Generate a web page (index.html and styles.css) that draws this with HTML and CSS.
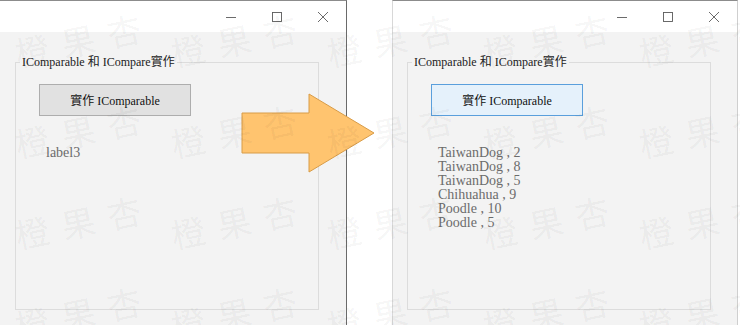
FILE: index.html
```html
<!DOCTYPE html>
<html>
<head>
<meta charset="utf-8">
<title>IComparable 和 ICompare實作</title>
<link rel="stylesheet" href="styles.css">
</head>
<body>
    <div class="screen">
        <div class="window window-before">
            <div class="titlebar">
                <span class="caption-btn">
                    <svg width="10" height="10" viewBox="0 0 10 10"><path d="M0 5.5h10" /></svg>
                </span>
                <span class="caption-btn">
                    <svg width="10" height="10" viewBox="0 0 10 10"><rect x="0.5" y="0.5" width="9" height="9" /></svg>
                </span>
                <span class="caption-btn">
                    <svg width="10" height="10" viewBox="0 0 10 10"><path d="M0 0l10 10M10 0L0 10" /></svg>
                </span>
            </div>
            <div class="client">
                <fieldset class="groupbox">
                    <legend>IComparable 和 ICompare實作</legend>
                    <button class="win-button">實作 IComparable</button>
                    <div class="output">label3</div>
                </fieldset>
            </div>
        </div>

        <div class="window window-after">
            <div class="titlebar">
                <span class="caption-btn">
                    <svg width="10" height="10" viewBox="0 0 10 10"><path d="M0 5.5h10" /></svg>
                </span>
                <span class="caption-btn">
                    <svg width="10" height="10" viewBox="0 0 10 10"><rect x="0.5" y="0.5" width="9" height="9" /></svg>
                </span>
                <span class="caption-btn">
                    <svg width="10" height="10" viewBox="0 0 10 10"><path d="M0 0l10 10M10 0L0 10" /></svg>
                </span>
            </div>
            <div class="client">
                <fieldset class="groupbox">
                    <legend>IComparable 和 ICompare實作</legend>
                    <button class="win-button hover">實作 IComparable</button>
                    <div class="output">
                        <div>TaiwanDog , 2</div>
                        <div>TaiwanDog , 8</div>
                        <div>TaiwanDog , 5</div>
                        <div>Chihuahua , 9</div>
                        <div>Poodle , 10</div>
                        <div>Poodle , 5</div>
                    </div>
                </fieldset>
            </div>
        </div>

        <svg class="arrow" width="136" height="81" viewBox="0 0 136 81">
            <polygon points="1,20 68,20 68,1 133,40 68,79 68,60 1,60" />
        </svg>

        <!-- watermark tiles, clipped at the right edge like the source -->
        <div class="watermark">
            <span>橙果杏</span><span>橙果杏</span><span>橙果杏</span><span>橙果杏</span><span>橙果杏</span>
            <span>橙果杏</span><span>橙果杏</span><span>橙果杏</span><span>橙果杏</span><span>橙果杏</span>
            <span>橙果杏</span><span>橙果杏</span><span>橙果杏</span><span>橙果杏</span><span>橙果杏</span>
            <span>橙果杏</span><span>橙果杏</span><span>橙果杏</span><span>橙果杏</span><span>橙果杏</span>
        </div>
    </div>
</body>
</html>
```

FILE: styles.css
```css
body {
    margin: 0;
    padding: 0;
    background-color: #ffffff;
    font-family: 'Liberation Serif', 'Noto Sans CJK TC', serif;
}

.screen {
    width: 740px;
    height: 325px;
    position: relative;
    display: flex;
    overflow: hidden;
    background-color: #ffffff;
}

.window {
    height: 325px;
    display: flex;
    flex-direction: column;
    border-top: 1px solid #8c8c8c;
    box-sizing: border-box;
}

.window-before {
    width: 347px;
    border-right: 1px solid #6a6a6a;
}

.window-after {
    width: 346px;
    margin-left: 45px;
    border-left: 1px solid #d8d8d8;
    border-right: 1px solid #cfcfcf;
}

.titlebar {
    height: 31px;
    background-color: #ffffff;
    display: flex;
    justify-content: flex-end;
}

.caption-btn {
    width: 46px;
    display: flex;
    justify-content: center;
    align-items: center;
}

.caption-btn svg {
    fill: none;
    stroke: #5a5a5a;
    stroke-width: 0.9;
}

.client {
    flex: 1;
    background-color: #f3f3f3;
    padding: 23px 0 0 15px;
}

.window-after .client {
    padding-left: 14px;
}

.groupbox {
    margin: 0;
    padding: 0;
    width: 304px;
    height: 255px;
    box-sizing: border-box;
    border: 1px solid #dcdcdc;
}

.groupbox legend {
    margin-left: 4px;
    padding: 0 2px;
    font-size: 12px;
    line-height: 14px;
    color: #222222;
}

.win-button {
    display: block;
    margin: 15px 0 0 23px;
    width: 152px;
    height: 32px;
    padding: 0;
    background-color: #e1e1e1;
    border: 1px solid #adadad;
    font-family: 'Liberation Serif', 'Noto Sans CJK TC', serif;
    font-size: 12px;
    color: #111111;
}

.win-button.hover {
    background-color: #e5f1fb;
    border-color: #5a9fdc;
}

.output {
    margin: 30px 0 0 30px;
    font-size: 14px;
    line-height: 14px;
    color: #6b6b6b;
}

.arrow {
    position: absolute;
    left: 241px;
    top: 93px;
}

.arrow polygon {
    fill: #ffc46f;
    stroke: #d89c48;
    stroke-width: 1;
}

.watermark {
    position: absolute;
    inset: 0;
    pointer-events: none;
    display: grid;
    grid-template-columns: repeat(5, 156px);
    grid-auto-rows: 91px;
    padding: 33px 0 0 15px;
}

.watermark span {
    font-family: 'Noto Sans CJK TC', sans-serif;
    font-size: 34px;
    line-height: 34px;
    letter-spacing: 13px;
    white-space: nowrap;
    color: rgba(0, 0, 0, 0.05);
    transform: rotate(-12deg);
    transform-origin: 17px 17px;
}
```
